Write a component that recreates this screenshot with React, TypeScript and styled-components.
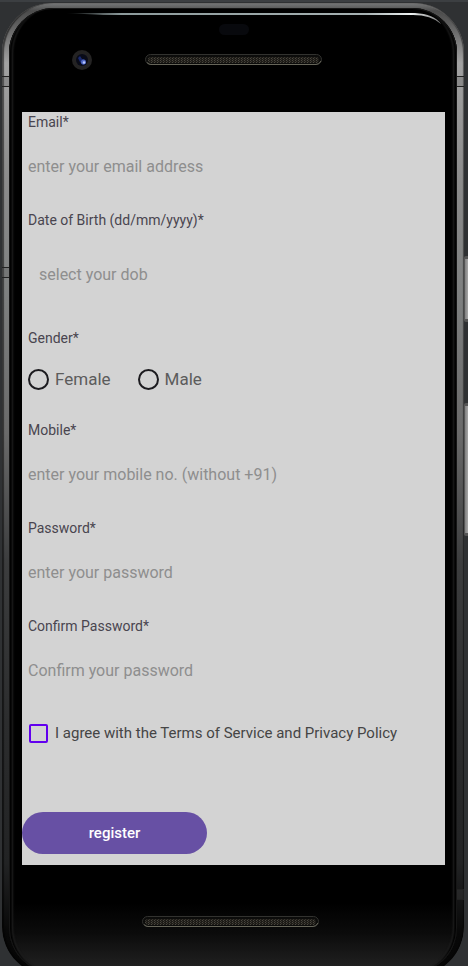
import React, { useId, useState } from 'react';
import styled, { createGlobalStyle } from 'styled-components';

const GlobalStyle = createGlobalStyle`
  *, *::before, *::after { box-sizing: border-box; }
  body {
    margin: 0;
    background: #2f3133;
    font-family: Roboto, sans-serif;
  }
`;

const Stage = styled.div`
  position: relative;
  height: 100vh;
  min-height: 966px;
  overflow: hidden;
  padding: 3px 4px 0 2px;
  border-top: 2px solid #3c3f42;
  background: #2f3133;
`;

const Shell = styled.div`
  position: relative;
  margin-top: -2px;
  padding: 5px 7px 3px;
  border-radius: 50px;
  background: linear-gradient(180deg, #77797a 0, #4c4c4c 8px, #5c5c5c 20px, #a2a2a2 60px, #8b8b8b 180px, #7e8080 290px, #6a6a6a 430px, #3c3d3e 560px, #2c2d2e 720px, #222324 860px, #080808 930px, #050505 100%);
  box-shadow: inset 2px 0 1px #0008, inset -1px 0 1px #0007, inset 0 1px 0 #777;
`;

const Bezel = styled.div`
  position: relative;
  padding: 0 12px 0 13px;
  border-radius: 45px;
  background: linear-gradient(180deg, #000 0, #000 895px, #0b0b0b 925px, #242424 100%);
  box-shadow: inset 0 0 0 1px #161616, inset 5px 0 2px -2px #000, inset 7px 0 2px -3px #292929, inset -5px 0 2px -2px #000, inset -7px 0 2px -3px #292929;
`;

const Highlight = styled.svg`
  position: absolute;
  top: 4px;
  right: 14px;
  width: 380px;
  height: 16px;
`;

const Band = styled.span<{ $side: 'left' | 'right'; $top: number }>`
  position: absolute;
  top: ${(p) => p.$top}px;
  ${(p) => p.$side}: 0;
  width: 7px;
  height: 11px;
  border: solid #222;
  border-width: 1px 0;
  background: #55555544;
`;

const SideKey = styled.span<{ $top: number; $height: number }>`
  position: absolute;
  top: ${(p) => p.$top}px;
  right: 0;
  width: 4px;
  height: ${(p) => p.$height}px;
  border: 1px solid #555;
  border-width: 3px 0 3px 1px;
  border-radius: 2px 0 0 2px;
  background: linear-gradient(90deg, #808080, #a6a6a6);
`;

const TopBezel = styled.header`
  display: grid;
  grid-template-columns: 1fr auto 1fr;
  align-items: center;
  justify-items: center;
  height: 104px;
`;

const Camera = styled.svg`
  width: 20px;
  height: 20px;
  margin-right: 4px;
`;

const Earpiece = styled.div`
  display: flex;
  flex-direction: column;
  align-items: center;
  gap: 19px;
  padding-bottom: 30px;
`;

const Sensor = styled.span`
  width: 30px;
  height: 11px;
  border-radius: 6px;
  background: #08090d;
`;

const Grille = styled.svg`
  display: block;
  width: 177px;
  height: 12px;
`;

const BottomBezel = styled.footer`
  display: flex;
  justify-content: center;
  height: 108px;
  padding: 51px 6px 0 0;
`;

const Screen = styled.main`
  background: #d3d3d3;
`;

const Form = styled.form`
  display: flex;
  flex-direction: column;
  gap: 10px;
  padding-bottom: 11px;
`;

const Field = styled.div`
  display: flex;
  flex-direction: column;
  padding: 0 6px;
`;

const Label = styled.label`
  font-size: 14px;
  line-height: 20px;
  color: #49454f;
`;

const Group = styled.fieldset`
  min-width: 0;
  margin: 0;
  padding: 0 6px;
  border: 0;
`;

const Legend = styled.legend`
  padding: 0;
  font-size: 14px;
  line-height: 20px;
  color: #49454f;
`;

const TextInput = styled.input<{ $roomy?: boolean }>`
  width: 100%;
  height: ${(p) => (p.$roomy ? 88 : 68)}px;
  padding: 0 ${(p) => (p.$roomy ? 11 : 0)}px;
  border: 0;
  outline: 0;
  background: transparent;
  font: 16px Roboto, sans-serif;
  color: #1c1b1f;
  &::placeholder { color: #8e8e8e; opacity: 1; }
`;

const Options = styled.div`
  display: flex;
  align-items: center;
  gap: 27px;
  height: 62px;
`;

const Option = styled.label`
  display: flex;
  align-items: center;
  gap: 6px;
  font-size: 17px;
  line-height: 24px;
  color: #5c5c5c;
`;

const Radio = styled.input`
  appearance: none;
  width: 21px;
  height: 21px;
  margin: 0;
  border: 2px solid #1c1b1f;
  border-radius: 50%;
  &:checked { background: radial-gradient(#1c1b1f 0 5px, transparent 6px); }
`;

const Agreement = styled.label`
  display: flex;
  align-items: center;
  gap: 7px;
  height: 38px;
  padding: 0 7px;
  font-size: 15px;
  line-height: 20px;
  color: #454545;
`;

const Checkbox = styled.input`
  appearance: none;
  flex: none;
  width: 19px;
  height: 19px;
  margin: 0;
  border: 2px solid #6200ee;
  border-radius: 2px;
  &:checked { background: #6200ee; }
`;

const RegisterButton = styled.button`
  width: 185px;
  height: 42px;
  margin-top: 50px;
  border: 0;
  border-radius: 21px;
  background: #6750a4;
  font: 500 15px Roboto, sans-serif;
  color: #fff;
  cursor: pointer;
`;

function SpeakerGrille() {
  const id = useId();
  return (
    <Grille viewBox="0 0 177 12" aria-hidden="true">
      <defs>
        <pattern id={id} width="3" height="2" patternUnits="userSpaceOnUse">
          <rect width="3" height="2" fill="#1d1b17" />
          <rect width="1" height="1" fill="#4a473f" />
          <rect x="1" y="1" width="1" height="1" fill="#37342d" />
        </pattern>
      </defs>
      <rect x="0.5" y="0.5" width="176" height="10" rx="5" fill="#0c0c0b" stroke="#32322f" />
      <rect x="3" y="3" width="171" height="6" rx="3" fill={`url(#${id})`} />
      <path d="M2 8.5 Q4 10.5 6 10.5 H171 Q174 10.5 176 7" fill="none" stroke="#666559" />
    </Grille>
  );
}

interface TextFieldProps {
  label: string;
  placeholder: string;
  type?: string;
  roomy?: boolean;
}

function TextField({ label, placeholder, type = 'text', roomy }: TextFieldProps) {
  const id = useId();
  return (
    <Field>
      <Label htmlFor={id}>{label}</Label>
      <TextInput id={id} type={type} placeholder={placeholder} $roomy={roomy} />
    </Field>
  );
}

export default function App() {
  const [gender, setGender] = useState('');
  const [agreed, setAgreed] = useState(false);

  return (
    <>
      <GlobalStyle />
      <Stage>
        <SideKey $top={254} $height={66} />
        <SideKey $top={401} $height={133} />
        <Shell>
          <Band $side="left" $top={73} />
          <Band $side="right" $top={73} />
          <Band $side="left" $top={264} />
          <Band $side="right" $top={886} />
          <Bezel>
            <Highlight viewBox="0 0 380 16" aria-hidden="true">
              <defs>
                <linearGradient id="shine">
                  <stop offset="0" stopColor="#8c9a9b" stopOpacity="0" />
                  <stop offset="0.15" stopColor="#8c9a9b" />
                  <stop offset="0.8" stopColor="#a6b1b2" />
                  <stop offset="0.92" stopColor="#eef2f2" />
                  <stop offset="1" stopColor="#777" />
                </linearGradient>
              </defs>
              <path d="M2 1 H352 Q371 2 378 12 Q368 3 350 3 H40 Z" fill="url(#shine)" />
            </Highlight>
            <TopBezel>
              <Camera viewBox="0 0 20 20" aria-hidden="true">
                <circle cx="10" cy="10" r="10" fill="#242323" />
                <circle cx="10" cy="10" r="6" fill="#090b18" />
                <path d="M6 8 L8 6 L10 9 L13 10 L14 13 L11 15 L8 12 Z" fill="#19296f" />
                <circle cx="11.5" cy="12" r="2.5" fill="#5068c4" />
                <circle cx="12" cy="12.5" r="1.2" fill="#b9c8ff" />
              </Camera>
              <Earpiece>
                <Sensor />
                <SpeakerGrille />
              </Earpiece>
            </TopBezel>
            <Screen>
              <Form onSubmit={(e: React.FormEvent) => e.preventDefault()}>
                <TextField label="Email*" placeholder="enter your email address" type="email" />
                <TextField label="Date of Birth (dd/mm/yyyy)*" placeholder="select your dob" roomy />
                <Group>
                  <Legend>Gender*</Legend>
                  <Options>
                    {['Female', 'Male'].map((name) => (
                      <Option key={name}>
                        <Radio
                          type="radio"
                          name="gender"
                          value={name}
                          checked={gender === name}
                          onChange={() => setGender(name)}
                        />
                        {name}
                      </Option>
                    ))}
                  </Options>
                </Group>
                <TextField label="Mobile*" placeholder="enter your mobile no. (without +91)" type="tel" />
                <TextField label="Password*" placeholder="enter your password" type="password" />
                <TextField label="Confirm Password*" placeholder="Confirm your password" type="password" />
                <Agreement>
                  <Checkbox type="checkbox" checked={agreed} onChange={() => setAgreed(!agreed)} />
                  I agree with the Terms of Service and Privacy Policy
                </Agreement>
                <RegisterButton type="submit">register</RegisterButton>
              </Form>
            </Screen>
            <BottomBezel>
              <SpeakerGrille />
            </BottomBezel>
          </Bezel>
        </Shell>
      </Stage>
    </>
  );
}
